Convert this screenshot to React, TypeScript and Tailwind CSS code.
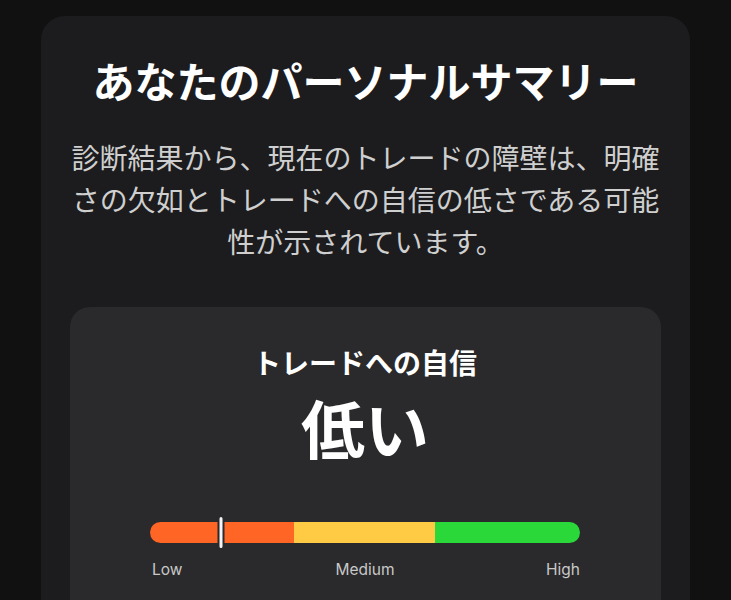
import React from "react";

export default function App() {
  const marker = 16.4;
  return (
    <div className="min-h-screen bg-[#111111] pt-4 font-['Noto_Sans_CJK_JP','Noto_Sans',sans-serif]">
      <div className="mx-auto w-[649px] rounded-[24px] bg-[#1c1c1e] px-[29px] pt-[39px] pb-10">
        <h1 className="text-center text-[42px] font-bold leading-[50px] text-white">
          あなたのパーソナルサマリー
        </h1>
        <p className="mx-auto mt-[31px] w-[590px] text-center text-[28px] leading-[42px] text-[#cfcfcf]">
          診断結果から、現在のトレードの障壁は、明確さの欠如とトレードへの自信の低さである可能性が示されています。
        </p>
        <div className="mt-[45px] rounded-[20px] bg-[#2a2a2c] pl-[80px] pr-[81px] pt-[36px] pb-10">
          <div className="text-center text-[28px] font-bold leading-[39px] text-white">
            トレードへの自信
          </div>
          <div className="mt-[6px] text-center text-[64px] font-bold leading-[77px] text-white">
            低い
          </div>
          <div className="relative mt-[57px] flex h-[21px] overflow-visible">
            <div className="flex h-full w-full overflow-hidden rounded-full">
              <div className="h-full w-[33.6%] bg-[#ff6524]" />
              <div className="h-full w-[32.6%] bg-[#ffcb45]" />
              <div className="h-full flex-1 bg-[#2ad83a]" />
            </div>
            <div
              className="absolute top-[-7px] h-[35px] w-[7px] -translate-x-1/2 rounded-full border-2 border-[#2a2a2c] bg-[#f4f4f8]"
              style={{ left: `${marker}%` }}
            />
          </div>
          <div className="mt-[17px] grid grid-cols-3 font-['Inter',sans-serif] text-[15.5px] leading-[20px] text-[#c8c8c8]">
            <span className="pl-[2px] text-left">Low</span>
            <span className="text-center">Medium</span>
            <span className="text-right">High</span>
          </div>
        </div>
      </div>
    </div>
  );
}
